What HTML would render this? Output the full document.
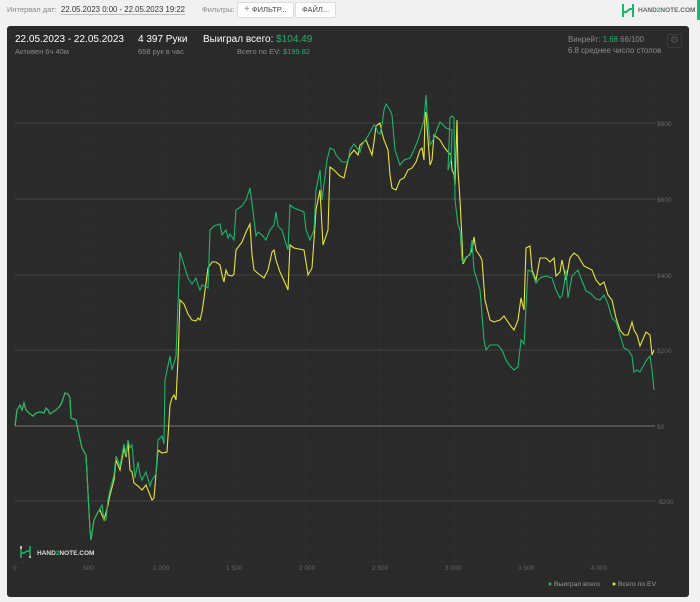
<!DOCTYPE html>
<html><head><meta charset="utf-8"><style>
*{margin:0;padding:0;box-sizing:border-box}
body{width:700px;height:602px;background:#f1f1f1;font-family:"Liberation Sans",sans-serif;position:relative;overflow:hidden}
.t{position:absolute;white-space:nowrap}
.btn{position:absolute;background:#fff;border:1px solid #ddd;border-radius:2px;font-size:7.5px;color:#444;height:16px;line-height:14px;padding:0 6px}
#p{position:absolute;left:7px;top:26px;width:682px;height:571px;background:#2a2a2a;border-radius:3px}
.w{color:#fff}.g{color:#1db56a}.s{color:#8a8a8a}
</style></head><body>
<div class="t" style="left:7px;top:5px;font-size:7.5px;color:#888">Интервал дат:</div>
<div class="t" style="left:61px;top:5px;font-size:7.8px;color:#333;border-bottom:1px solid #bbb">22.05.2023 0:00 - 22.05.2023 19:22</div>
<div class="t" style="left:182px;top:4px;font-size:7px;color:#aaa">▾</div>
<div class="t" style="left:202px;top:5px;font-size:7.5px;color:#888">Фильтры:</div>
<div class="btn" style="left:237px;top:2px"><span style="color:#888;font-size:10px">+</span> ФИЛЬТР...</div>
<div class="btn" style="left:295px;top:2px">ФАЙЛ...</div>
<svg style="position:absolute;left:622px;top:4px" width="12" height="13" viewBox="0 0 12 13"><path d="M1 0v13M11 0v13M1 8h3l4-3h3" stroke="#1db56a" stroke-width="2" fill="none"/></svg>
<div class="t" style="left:638px;top:7px;font-size:6.5px;color:#666;font-weight:bold">HAND<span class="g">2</span>NOTE.COM</div>
<div style="position:absolute;left:697px;top:0;width:3px;height:20px;background:#1db56a"></div>
<div id="p"></div>
<div class="t w" style="left:15px;top:34px;font-size:10px">22.05.2023 - 22.05.2023</div>
<div class="t s" style="left:15px;top:47px;font-size:7.5px">Активен 6ч 40м</div>
<div class="t w" style="left:138px;top:34px;font-size:10px">4 397 Руки</div>
<div class="t s" style="left:138px;top:47px;font-size:7.5px">658 рук в час</div>
<div class="t w" style="left:203px;top:34px;font-size:10px">Выиграл всего: <span class="g">$104.49</span></div>
<div class="t s" style="left:237px;top:47px;font-size:7.5px">Всего по EV: <span class="g">$199.82</span></div>
<div class="t s" style="left:568px;top:35px;font-size:7.8px">Винрейт: <span class="g">1.68</span> 66/100</div>
<div class="t s" style="left:568px;top:46px;font-size:7.8px">6.8 среднее число столов</div>
<div style="position:absolute;left:667px;top:34px;width:15px;height:14px;border:1px solid #3a3a3a;border-radius:2px;color:#555;font-size:10px;text-align:center;line-height:12px">⚙</div>
<svg style="position:absolute;left:0;top:0" width="700" height="602">
<g stroke="#303030" stroke-width="0.8">
<path d="M15 85H655M15 100H655M15 115H655M15 138H655M15 153H655M15 168H655M15 184H655M15 214H655M15 229H655M15 244H655M15 259H655M15 290H655M15 305H655M15 320H655M15 335H655M15 365H655M15 380H655M15 395H655M15 410H655M15 441H655M15 456H655M15 471H655M15 486H655M15 516H655M15 531H655M15 546H655M15 562H655"/>
<path d="M15 70V562M88 70V562M161 70V562M234 70V562M307 70V562M380 70V562M453 70V562M526 70V562M599 70V562M655 70V562"/>
</g>
<g stroke="#424242" stroke-width="1"><path d="M15 123H655M15 199H655M15 275H655M15 350H655M15 501H655"/></g>
<path d="M15 426H655" stroke="#777" stroke-width="1"/>
<g fill="#666" font-size="6.5" font-family="Liberation Sans">
<text x="657" y="126">$800</text><text x="657" y="202">$600</text><text x="657" y="278">$400</text><text x="657" y="353">$200</text><text x="657" y="429">$0</text><text x="657" y="504">-$200</text>
<text x="13" y="570">0</text><text x="83" y="570">500</text><text x="153" y="570">1 000</text><text x="226" y="570">1 500</text><text x="299" y="570">2 000</text><text x="372" y="570">2 500</text><text x="445" y="570">3 000</text><text x="518" y="570">3 500</text><text x="591" y="570">4 000</text>
</g>
<polyline fill="none" stroke="#e8e33a" stroke-width="1.1" points="15,426 17,410 20,405 22,410 24,403 26,410 30,414 33,416 36,413 40,412 44,413 46,408 48,410 50,414 56,410 60,406 62,402 65,393 68,394 70,398 71,418 76,420 78,430 82,448 86,455 90,530 91,540 94,520 98,512 100,510 104,520 108,505 110,495 114,480 116,460 120,470 124,448 126,457 128,442 130,470 132,472 134,483 138,486 142,490 146,485 150,495 152,500 154,498 158,450 162,453 167,452 170,405 172,398 174,395 176,400 178,360 180,300 184,304 188,314 192,320 196,321 198,318 200,320 202,312 204,298 208,268 212,262 216,262 220,265 222,275 224,282 226,270 228,275 232,276 234,274 236,250 242,242 246,232 250,224 252,255 254,270 260,275 264,278 268,270 272,252 274,250 276,260 280,272 286,285 288,290 290,245 294,248 304,250 306,262 308,275 312,268 314,240 316,210 320,190 323,245 328,230 330,167 334,170 340,176 344,178 348,160 350,155 354,150 358,155 360,145 366,140 370,150 372,155 374,142 376,126 380,123 382,133 384,140 388,150 390,175 392,188 396,190 400,180 404,178 408,170 412,168 416,162 420,150 422,148 424,160 425,112 426,113 428,140 430,165 432,160 434,135 440,140 444,147 448,152 451,155 452,170 454,174 455,185 457,120 458,170 460,200 462,240 463,264 466,258 470,254 472,250 474,237 476,250 480,256 482,260 485,300 488,312 490,320 494,322 500,320 504,316 510,325 514,330 518,320 521,298 524,310 526,248 530,246 532,270 536,280 540,258 546,258 550,262 554,258 556,276 560,272 562,260 566,280 570,258 574,253 578,256 584,266 592,270 596,280 600,285 604,282 608,295 612,300 616,318 620,330 624,335 628,335 632,322 634,330 637,335 640,346 646,332 650,335 652,355 654,350"/>
<polyline fill="none" stroke="#1db56a" stroke-width="1.1" points="15,426 17,410 20,405 22,410 24,403 26,410 30,414 33,416 36,413 40,412 44,413 46,408 48,410 50,414 56,410 60,406 62,402 65,393 68,394 70,398 71,418 76,420 78,430 82,448 86,455 90,530 91,540 94,520 98,512 102,505 104,520 106,520 108,500 110,490 114,475 116,456 120,466 124,444 126,455 128,440 130,448 132,445 135,478 138,462 140,475 142,480 146,472 150,486 152,480 156,474 158,440 162,436 164,444 165,380 170,356 172,370 176,356 180,252 184,265 188,278 192,284 196,278 198,285 200,290 202,285 208,288 210,230 214,226 220,224 222,235 226,230 228,238 230,234 234,240 236,210 242,206 246,200 250,188 252,203 256,236 258,232 262,235 266,240 270,230 274,225 276,212 278,226 282,230 286,244 288,250 290,205 294,208 304,212 306,230 310,240 314,230 316,190 320,170 322,200 327,160 330,148 334,150 336,155 342,162 348,162 350,150 354,144 360,152 362,145 368,136 374,125 376,127 378,133 380,134 382,125 384,110 386,104 390,110 392,115 395,150 400,165 404,160 410,158 414,150 418,140 422,127 424,120 426,95 427,112 428,120 430,145 433,140 438,127 440,122 446,128 452,130 451,160 448,170 450,118 452,116 454,118 455,200 458,225 460,230 462,260 463,262 466,257 470,255 472,240 474,270 480,290 484,340 486,350 490,345 498,345 502,350 506,360 510,366 514,370 518,367 521,340 524,344 528,270 532,272 536,283 540,278 546,276 552,278 556,290 560,298 562,296 564,285 566,270 568,298 572,276 578,270 582,281 586,291 590,293 596,299 600,300 604,295 608,304 612,318 616,322 620,335 624,348 628,350 632,356 634,372 637,370 640,372 646,361 650,356 652,370 654,390"/>
<rect x="16" y="542" width="80" height="18" fill="#2a2a2a"/>
<path d="M21 546v12M30 546v12M21 553h3l3-2h3" stroke="#1db56a" stroke-width="1.5" fill="none"/>
<path d="M21 546v3M30 556v2" stroke="#ddd" stroke-width="1.5"/>
<text x="37" y="555" font-size="6.5" font-weight="bold" fill="#ddd" font-family="Liberation Sans">HAND<tspan fill="#1db56a">2</tspan>NOTE.COM</text>
<circle cx="550" cy="584" r="1.5" fill="#1db56a"/><text x="554" y="586" font-size="6.8" fill="#999" font-family="Liberation Sans">Выиграл всего</text>
<circle cx="614" cy="584" r="1.5" fill="#e8e33a"/><text x="618" y="586" font-size="6.8" fill="#999" font-family="Liberation Sans">Всего по EV</text>
</svg>
</body></html>
